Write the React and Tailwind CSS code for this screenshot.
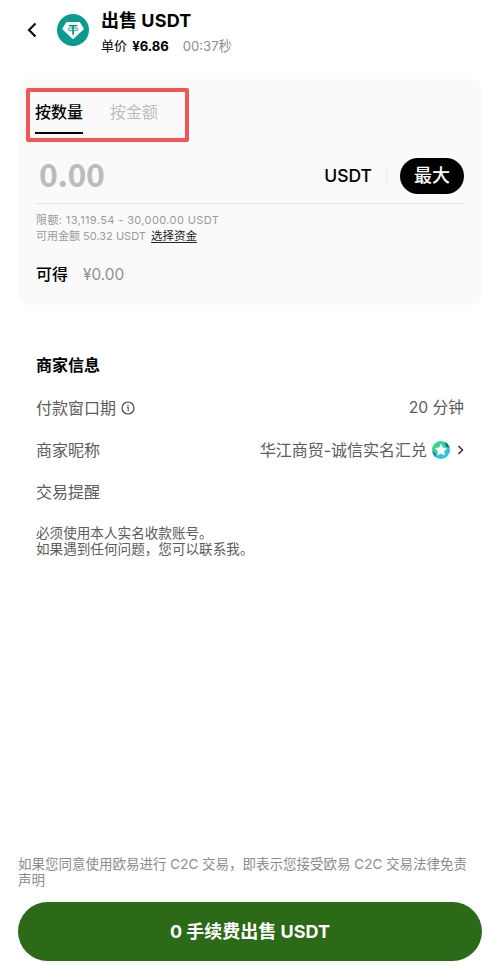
import React from 'react';

const TetherIcon = () => (
  <svg width="32" height="32" viewBox="0 0 32 32" className="block shrink-0">
    <circle cx="16" cy="16" r="16" fill="#0b9a8f" />
    <path d="M10.2 8h11.9c.5 0 .8.2 1 .6l3.9 6.3-10.3 9.8c-.4.4-.9.4-1.3 0L5.1 14.9 9.1 8.6c.2-.4.6-.6 1.1-.6z" fill="#fff" />
    <path d="M11.9 11h8.5v1.6h-3.4v8.2h-1.8v-8.2h-3.3z" fill="#0b9a8f" />
    <ellipse cx="16.1" cy="15.4" rx="5.2" ry="1.5" fill="none" stroke="#0b9a8f" strokeWidth="0.9" />
  </svg>
);

const MerchantBadge = () => (
  <svg width="18" height="18" viewBox="0 0 18 18" className="block shrink-0">
    <defs>
      <linearGradient id="badge" x1="0" y1="0" x2="1" y2="1">
        <stop offset="0.25" stopColor="#35d586" />
        <stop offset="0.7" stopColor="#2cc3e2" />
      </linearGradient>
    </defs>
    <circle cx="9" cy="9" r="9" fill="url(#badge)" />
    <path d="M12.6.8a9 9 0 0 1 5 5.6l-3.4-.6z" fill="#176d78" />
    <path d="M.2 10.6a9 9 0 0 0 3.4 5.6l1-3.6z" fill="#2385c4" />
    <path d="M9 3.3l1.8 3.5 3.9.6-2.8 2.8.6 3.9L9 12.3l-3.5 1.8.6-3.9-2.8-2.8 3.9-.6z" fill="#fff" stroke="#fff" strokeWidth="0.6" strokeLinejoin="round" />
  </svg>
);

const InfoIcon = () => (
  <svg width="14" height="14" viewBox="0 0 14 14" className="block shrink-0">
    <circle cx="7" cy="7" r="6" fill="none" stroke="#444" strokeWidth="1.2" />
    <path d="M5.9 6.2h1.3v4M7 3.6v1.2" fill="none" stroke="#444" strokeWidth="1.1" />
  </svg>
);

const InfoRow = ({ label, children }) => (
  <div className="flex h-[42px] items-center justify-between text-[#5c5c5c]">
    <div className="flex items-center gap-[5px]">{label}</div>
    <div className="flex items-center">{children}</div>
  </div>
);

export default function App() {
  return (
    <div className="flex h-[977px] w-[500px] flex-col overflow-hidden bg-white px-[18px] font-[Inter,'Noto_Sans_CJK_SC',sans-serif] text-[16px] whitespace-nowrap text-black">
      {/* Header */}
      <header className="flex h-[79px] shrink-0 items-start pt-[9px] pl-[8px]">
        <svg width="12" height="16" viewBox="0 0 12 16" className="mt-[13px] block">
          <path d="M9.5 1.5L3 8l6.5 6.5" fill="none" stroke="#000" strokeWidth="2.1" />
        </svg>
        <div className="mt-[5px] ml-[19px]">
          <TetherIcon />
        </div>
        <div className="ml-[12px]">
          <h1 className="text-[18px] leading-[24px] font-bold">
            出售 <span className="tracking-[0.2px]">USDT</span>
          </h1>
          <div className="mt-[1px] flex text-[13.1px] leading-[24px]">
            <span>单价</span>
            <span className="ml-[5px] font-bold">¥6.86</span>
            <span className="ml-[14px] text-[#8c8c8c]">00:37秒</span>
          </div>
        </div>
      </header>

      {/* Amount card */}
      <section className="relative h-[226px] shrink-0 rounded-[10px] bg-[#fafafa] px-[18px]">
        <div className="absolute top-[9px] left-[8px] h-[54px] w-[163px] rounded-[2px] border-4 border-[#f25555]" />
        <div className="flex h-[55px] items-start gap-[27px]">
          <div className="-ml-px h-[55px] border-b-[2.5px] border-black pt-[21px] leading-[24px] font-medium">按数量</div>
          <div className="pt-[21px] leading-[24px] text-[#bdbdbd]">按金额</div>
        </div>
        <div className="flex h-[70px] items-center border-b border-[#e3e3e3] pt-[14px]">
          <span className="mb-[6px] ml-[3px] flex-1 font-['Noto_Sans_CJK_SC'] text-[32px] leading-[36px] font-bold tracking-[-0.4px] text-[#bcbcbc]">0.00</span>
          <span className="mt-px text-[17.5px] font-medium">USDT</span>
          <span className="ml-[14px] h-[18px] w-px bg-[#ececec]" />
          <button className="ml-[13px] h-[36px] w-[64px] rounded-full bg-black text-[18px] leading-[36px] font-medium text-white">最大</button>
        </div>
        <div className="mt-[8px] text-[11px] leading-[16px] text-[#9b9b9b]">
          <div className="tracking-[0.38px]">限额: 13,119.54 - 30,000.00 USDT</div>
          <div>
            可用金额 50.32 USDT <span className="ml-[2px] text-[11.5px] text-[#222] underline underline-offset-2">选择资金</span>
          </div>
        </div>
        <div className="mt-[18px] flex leading-[24px]">
          <span className="font-medium">可得</span>
          <span className="mt-px ml-[15px] text-[15.4px] text-[#8f8f8f]">¥0.00</span>
        </div>
      </section>

      {/* Merchant info */}
      <section className="mt-[47px] px-[18px]">
        <h2 className="mb-[9px] leading-[26px] font-bold">商家信息</h2>
        <InfoRow label={<>付款窗口期 <InfoIcon /></>}>
          <span className="text-[15.7px]">20 分钟</span>
        </InfoRow>
        <InfoRow label="商家昵称">
          <span>华江商贸-诚信实名汇兑</span>
          <span className="ml-[5px]">
            <MerchantBadge />
          </span>
          <svg width="7" height="10" viewBox="0 0 7 10" className="ml-[7px] block">
            <path d="M1.5 1L5.5 5l-4 4" fill="none" stroke="#333" strokeWidth="1.5" />
          </svg>
        </InfoRow>
        <InfoRow label="交易提醒" />
        <p className="mt-[12px] text-[13.6px] leading-[16px] text-[#5c5c5c]">
          必须使用本人实名收款账号。
          <br />
          如果遇到任何问题，您可以联系我。
        </p>
      </section>

      {/* Footer */}
      <footer className="mt-auto pb-[16px]">
        <p className="mb-[14px] text-[13.5px] leading-[16px] text-[#8c8c8c]">
          如果您同意使用欧易进行 C2C 交易，即表示您接受欧易 C2C 交易法律免责
          <br />
          声明
        </p>
        <button className="block h-[59px] w-[464px] rounded-full bg-[#2b6b17] text-[18px] font-bold text-white">
          0 手续费出售 USDT
        </button>
      </footer>
    </div>
  );
}
